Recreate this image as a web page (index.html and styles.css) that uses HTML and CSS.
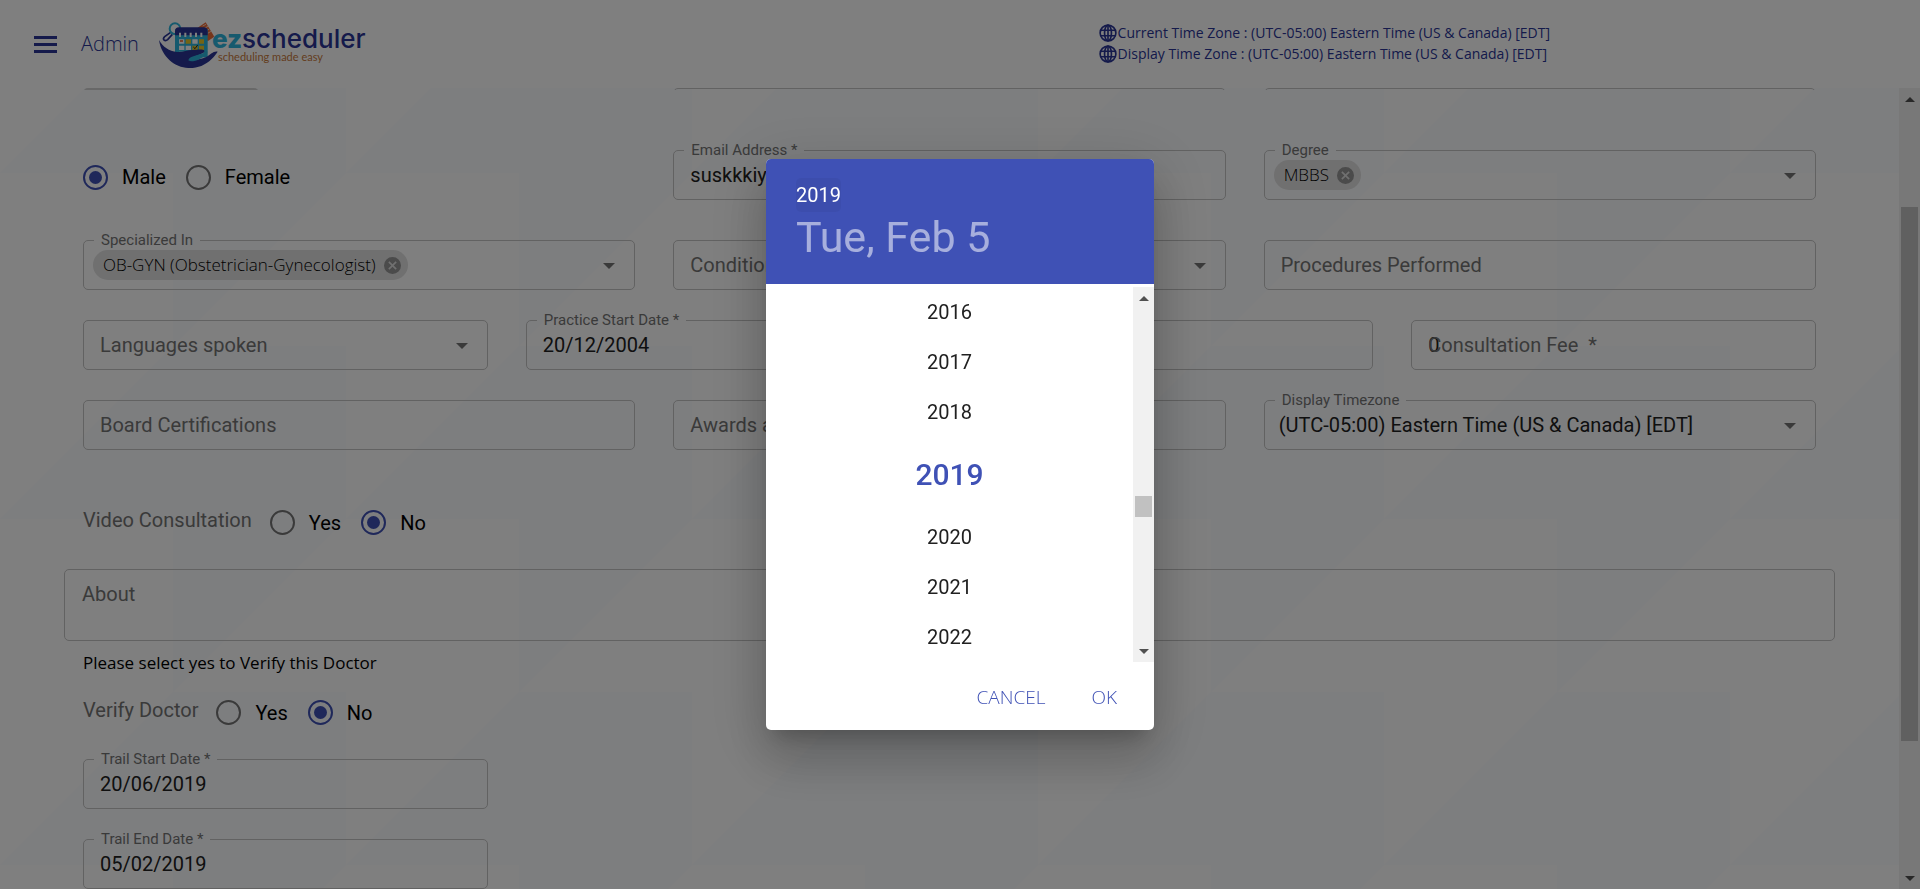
FILE: index.html
```html
<!DOCTYPE html>
<html lang="en">
<head>
<meta charset="utf-8">
<meta name="viewport" content="width=device-width, initial-scale=1">
<title>ezscheduler - Admin</title>
<link rel="stylesheet" href="styles.css">
</head>
<body>
<svg class="defs" width="0" height="0" aria-hidden="true">
  <symbol id="globe" viewBox="0 0 24 24"><g fill="none" stroke="currentColor" stroke-width="2.2"><circle cx="12" cy="12" r="10.5"/><ellipse cx="12" cy="12" rx="4.6" ry="10.5"/><path d="M2.500 8.300h19M2.500 15.700h19M12 1.500v21"/></g></symbol>
  <symbol id="cancel" viewBox="0 0 20 20"><path fill="currentColor" fill-rule="evenodd" d="M10 0a10 10 0 1 0 0 20 10 10 0 0 0 0-20zm5 13.600L13.600 15 10 11.400 6.400 15 5 13.600 8.600 10 5 6.400 6.400 5 10 8.600 13.600 5 15 6.400 11.400 10z"/></symbol>
</svg>

<header class="topbar">
  <button class="menu" type="button" aria-label="Open menu"><span></span><span></span><span></span></button>
  <span class="role">Admin</span>
  <a class="logo" href="#" aria-label="ezscheduler home">
    <svg class="logo-mark" viewBox="0 0 225 156" aria-hidden="true">
      <g fill="none" stroke="#2a3596" stroke-width="5"><path d="M47 43 29 56q-6 6-2 10 5 4 11-1L52 49"/></g>
      <circle cx="60" cy="32" r="16" fill="none" stroke="#2cb4dc" stroke-width="6"/>
      <path d="M128 29 152 13 178 56 158 70z" fill="#ec6a35"/>
      <path d="M143 24l10-5M148 31l11-6M153 39l10-6M158 46l10-6" stroke="#fff" stroke-width="2"/>
      <rect x="60" y="34" width="98" height="84" fill="#2cb4dc"/>
      <path d="M60 52V40q0-12 12-12h74q12 0 12 12v12z" fill="#2a3596"/>
      <path d="M75 44v13M91 44v13M107 44v13M123 44v13M139 44v13" stroke="#fff" stroke-width="6"/>
      <g fill="#fff"><path d="M72 64h16v13H72zM112 64h16v13h-16zM72 83h16v13H72zM92 83h16v13H92zM72 101h16v12H72zM92 101h16v12H92zM132 101h14v8h-14z"/></g>
      <g fill="#e8c928"><path d="M92 64h16v13H92zM132 64h15v13h-15zM112 83h16v13h-16zM132 83h15v13h-15z"/></g>
      <path d="M75 69h9" stroke="#ec6a35" stroke-width="5"/>
      <path d="M115 87l5 5 8-11" fill="none" stroke="#222" stroke-width="3"/>
      <path d="M12 66C24 88 42 99 66 102c16 2 30-6 46-6 16-1 34-3 36 2 1 6-8 10-20 13l-26 13c14 3 36 1 50-6 14-8 24-20 36-17-6 8-10 14-18 22-20 20-44 28-70 27C60 148 20 118 12 66z" fill="#2a3596"/>
      <path d="M100 127c4-12 16-12 30-17 12-4 22-7 28-9-8 15-24 24-40 28-8 2-14 1-18-2z" fill="#2cb4dc"/>
    </svg>
    <span class="logo-words"><span class="logo-name"><b>ez</b>scheduler</span><span class="logo-tag">scheduling made easy</span></span>
  </a>
  <div class="zones">
    <span class="zone"><svg><use href="#globe"/></svg>Current Time Zone : (UTC-05:00) Eastern Time (US &amp; Canada) [EDT]</span>
    <span class="zone"><svg><use href="#globe"/></svg>Display Time Zone : (UTC-05:00) Eastern Time (US &amp; Canada) [EDT]</span>
  </div>
</header>

<div class="page">
<main class="content">
  <form class="form">
    <div class="row thirds cut"><div class="photo"></div><div class="box"></div><div class="box"></div></div>

    <div class="row thirds first">
      <div class="radios" role="radiogroup" aria-label="Gender">
        <label><input type="radio" name="gender" checked>Male</label>
        <label><input type="radio" name="gender">Female</label>
      </div>
      <fieldset class="field"><legend><label for="email">Email Address *</label></legend><input id="email" type="text" value="suskkkiya@gmail.com"></fieldset>
      <fieldset class="field chips"><legend>Degree</legend><span class="chip">MBBS<button type="button" aria-label="Remove MBBS"><svg><use href="#cancel"/></svg></button></span><button class="arrow" type="button" aria-label="Show degrees"></button></fieldset>
    </div>

    <div class="row thirds second">
      <fieldset class="field chips"><legend>Specialized In</legend><span class="chip">OB-GYN (Obstetrician-Gynecologist)<button type="button" aria-label="Remove specialization"><svg><use href="#cancel"/></svg></button></span><button class="arrow" type="button" aria-label="Show specializations"></button></fieldset>
      <div class="field pick"><select class="empty" aria-label="Conditions Treated"><option>Conditions Treated</option></select><span class="arrow"></span></div>
      <div class="field"><input type="text" placeholder="Procedures Performed" aria-label="Procedures Performed"></div>
    </div>

    <div class="row quarters">
      <div class="field pick"><select class="empty" aria-label="Languages spoken"><option>Languages spoken</option></select><span class="arrow"></span></div>
      <fieldset class="field"><legend><label for="practice">Practice Start Date *</label></legend><input id="practice" type="text" value="20/12/2004"></fieldset>
      <div class="field"><input type="text" aria-label="Experience"></div>
      <div class="field"><label class="over" for="fee">Consultation Fee &nbsp;*</label><input id="fee" type="text" value="0"></div>
    </div>

    <div class="row thirds">
      <div class="field"><input type="text" placeholder="Board Certifications" aria-label="Board Certifications"></div>
      <div class="field"><input type="text" placeholder="Awards and Recognitions" aria-label="Awards and Recognitions"></div>
      <fieldset class="field pick"><legend><label for="tz">Display Timezone</label></legend><select id="tz"><option>(UTC-05:00) Eastern Time (US &amp; Canada) [EDT]</option></select><span class="arrow"></span></fieldset>
    </div>

    <div class="question video" role="radiogroup" aria-labelledby="video-label">
      <span class="caption" id="video-label">Video Consultation</span>
      <div class="radios">
        <label><input type="radio" name="video">Yes</label>
        <label><input type="radio" name="video" checked>No</label>
      </div>
    </div>

    <textarea class="about" placeholder="About" aria-label="About"></textarea>

    <p class="hint">Please select yes to Verify this Doctor</p>

    <div class="question" role="radiogroup" aria-labelledby="verify-label">
      <span class="caption" id="verify-label">Verify Doctor</span>
      <div class="radios">
        <label><input type="radio" name="verify">Yes</label>
        <label><input type="radio" name="verify" checked>No</label>
      </div>
    </div>

    <div class="row quarters trial">
      <fieldset class="field"><legend><label for="start">Trail Start Date *</label></legend><input id="start" type="text" value="20/06/2019"></fieldset>
    </div>
    <div class="row quarters">
      <fieldset class="field"><legend><label for="end">Trail End Date *</label></legend><input id="end" type="text" value="05/02/2019"></fieldset>
    </div>
  </form>
</main>
<div class="scrollbar page-scroll" aria-hidden="true"><i class="up"></i><div class="track"><div class="before"></div><div class="thumb"></div><div class="after"></div></div><i class="down"></i></div>
</div>

<div class="backdrop">
  <div class="dialog" role="dialog" aria-modal="true" aria-label="Choose year">
    <div class="dialog-head">
      <button class="year-now" type="button">2019</button>
      <button class="date-now" type="button">Tue, Feb 5</button>
    </div>
    <div class="picker">
      <div class="years">
        <button type="button">2016</button>
        <button type="button">2017</button>
        <button type="button">2018</button>
        <button class="selected" type="button">2019</button>
        <button type="button">2020</button>
        <button type="button">2021</button>
        <button type="button">2022</button>
      </div>
      <div class="scrollbar" aria-hidden="true"><i class="up"></i><div class="track"><div class="before"></div><div class="thumb"></div><div class="after"></div></div><i class="down"></i></div>
    </div>
    <div class="actions"><button type="button">CANCEL</button><button type="button">OK</button></div>
  </div>
</div>
</body>
</html>
```

FILE: styles.css
```css
:root {
  --primary: #3f51b5;
  --navy: #2a3596;
  --muted: #757575;
  --line: #c4c4c4;
  --soft: "Open Sans", "Noto Sans", sans-serif;
}

* { box-sizing: border-box; }

body {
  margin: 0;
  height: 100vh;
  overflow: hidden;
  display: flex;
  flex-direction: column;
  font: 20px/24px Roboto, sans-serif;
  color: #212121;
  background: #fefefe url("data:image/svg+xml,%3Csvg xmlns='http://www.w3.org/2000/svg' width='346' height='346'%3E%3Cpath fill='%23fafcff' d='M0 173 173 0H346V173L173 346V173z'/%3E%3C/svg%3E");
}

button, input, select, textarea {
  font: inherit;
  color: inherit;
  border: 0;
  padding: 0;
  margin: 0;
  background: none;
  outline: 0;
}

.defs { position: absolute; }

/* Top bar */
.topbar {
  flex: none;
  display: flex;
  align-items: center;
  height: 88px;
  padding: 0 34px;
  background: #fff;
  color: var(--navy);
  font-family: var(--soft);
}
.menu {
  display: flex;
  flex-direction: column;
  gap: 4px;
  width: 23px;
}
.menu span { height: 3px; background: var(--navy); }
.role { margin-left: 24px; font-weight: 300; }
.logo {
  display: flex;
  margin-left: 16px;
  color: var(--navy);
  text-decoration: none;
}
.logo-mark { width: 75px; height: 52px; flex: none; }
.logo-words {
  display: flex;
  flex-direction: column;
  margin: 8px 0 0 -18px;
  font-family: Inter, sans-serif;
}
.logo-name { font-size: 26px; line-height: 26px; font-weight: 500; }
.logo-name b { font-weight: 800; color: #2cb4dc; }
.logo-tag { margin-left: 6px; font: 11px/10px Lato, sans-serif; color: #c87a3c; }
.zones {
  display: flex;
  flex-direction: column;
  margin: 0 336px 2px auto;
  font-size: 14px;
  line-height: 21px;
}
.zone { display: flex; align-items: center; gap: 1px; }
.zone svg { width: 18px; height: 18px; }

/* Page body and its scrollbar */
.page { flex: 1; min-height: 0; display: flex; }
.content { flex: 1; min-width: 0; overflow: hidden; padding: 0 64px; }

.scrollbar {
  flex: none;
  display: flex;
  flex-direction: column;
  align-items: center;
  width: 21px;
  background: #f1f1f1;
}
.scrollbar .up, .scrollbar .down { flex: none; height: 22px; display: flex; align-items: center; }
.scrollbar .up::before, .scrollbar .down::before {
  content: "";
  border: 5px solid transparent;
}
.scrollbar .up::before { border-top: 0; border-bottom-color: #505050; }
.scrollbar .down::before { border-bottom: 0; border-top-color: #505050; }
.track { flex: 1; display: flex; flex-direction: column; width: 17px; }
.thumb { background: #c1c1c1; }
.page-scroll .before { flex: 97; }
.page-scroll .thumb { flex: 534; }
.page-scroll .after { flex: 126; }

/* Form */
.row { display: grid; column-gap: 38px; padding: 0 19px; margin-top: 30px; }
.thirds { grid-template-columns: repeat(3, minmax(0, 1fr)); }
.quarters { grid-template-columns: repeat(4, minmax(0, 1fr)); }
.cut { height: 2px; margin: 0; overflow: hidden; align-items: end; }
.box { height: 50px; border: 1px solid var(--line); border-radius: 5px; }
.photo { width: 176px; height: 50px; border-radius: 5px; background: #d0d0d0; }
.first { margin-top: 60px; }
.second { margin-top: 40px; }
.trial { margin-top: 34px; }

.field {
  position: relative;
  display: flex;
  align-items: center;
  height: 50px;
  margin: 0;
  min-width: 0;
  padding: 0;
  border: 1px solid var(--line);
  border-radius: 5px;
}
.field input, .field select {
  width: 100%;
  height: 46px;
  padding: 0 16px;
  border-radius: 5px;
}
.field select { appearance: none; padding-right: 45px; }
.field #tz { padding-left: 14px; }
.field .empty { color: var(--muted); }
::placeholder { color: var(--muted); opacity: 1; }
.field legend {
  height: 1px;
  margin-left: 10px;
  padding: 0 7px;
  font-size: 15px;
  line-height: 1px;
  color: var(--muted);
}
.over { position: absolute; left: 16px; color: var(--muted); }
.arrow {
  position: absolute;
  right: 19px;
  top: 22px;
  border: 6px solid transparent;
  border-top-color: var(--muted);
  border-bottom: 0;
  pointer-events: none;
}
.chips { padding: 0 9px; }
.chips legend { margin-left: 1px; }
.chip {
  display: flex;
  align-items: center;
  gap: 8px;
  height: 30px;
  padding: 0 7px 0 10px;
  border-radius: 15px;
  background: #e0e0e0;
  font-family: var(--soft);
  font-size: 17px;
  font-weight: 300;
  color: #000;
}
.chip button { display: flex; color: #969696; }
.chip svg { width: 17px; height: 17px; }

.radios { display: flex; align-items: center; gap: 20px; color: #000; }
.radios label { display: flex; align-items: center; gap: 14px; }
.radios input {
  appearance: none;
  display: grid;
  place-items: center;
  width: 25px;
  height: 25px;
  border: 2px solid var(--muted);
  border-radius: 50%;
}
.radios input:checked { border-color: var(--primary); }
.radios input:checked::before {
  content: "";
  width: 13px;
  height: 13px;
  border-radius: 50%;
  background: var(--primary);
}
.first .radios { height: 54px; margin-bottom: -4px; }

.question { display: flex; gap: 18px; padding: 0 19px; }
.question .caption { color: var(--muted); }
.question .radios { margin-top: 2px; }
.video { margin-top: 58px; }

.about {
  display: block;
  width: 100%;
  height: 72px;
  margin-top: 34px;
  padding: 12px 17px;
  border: 1px solid var(--line);
  border-radius: 5px;
  resize: none;
}
.hint {
  margin: 10px 19px 23px;
  font-family: var(--soft);
  font-size: 17px;
  color: #000;
}

/* Year picker dialog */
.backdrop {
  position: fixed;
  inset: 0;
  display: flex;
  align-items: center;
  justify-content: center;
  background: rgba(0, 0, 0, 0.5);
}
.dialog {
  width: 388px;
  overflow: hidden;
  border-radius: 5px;
  background: #fff;
  box-shadow: 0 14px 19px -9px rgba(0, 0, 0, 0.2), 0 30px 48px 4px rgba(0, 0, 0, 0.14), 0 11px 58px 10px rgba(0, 0, 0, 0.12);
}
.dialog-head {
  display: flex;
  flex-direction: column;
  align-items: flex-start;
  height: 125px;
  padding: 19px 30px;
  background: var(--primary);
  color: #fff;
}
.year-now { height: 34px; border-radius: 5px; background: rgba(0, 0, 0, 0.04); }
.date-now { font-size: 43px; line-height: 50px; color: rgba(255, 255, 255, 0.54); }
.picker { display: flex; padding-top: 3px; }
.years { flex: 1; display: flex; flex-direction: column; }
.years button { height: 50px; }
.years .selected { height: 75px; font-size: 30px; font-weight: 500; color: var(--primary); }
.picker .before { flex: 187; }
.picker .thumb { flex: 21; }
.picker .after { flex: 123; }
.actions { display: flex; justify-content: flex-end; gap: 46px; padding: 23px 37px 21px; }
.actions button { font-family: var(--soft); font-size: 19px; font-weight: 300; color: var(--primary); }
```
